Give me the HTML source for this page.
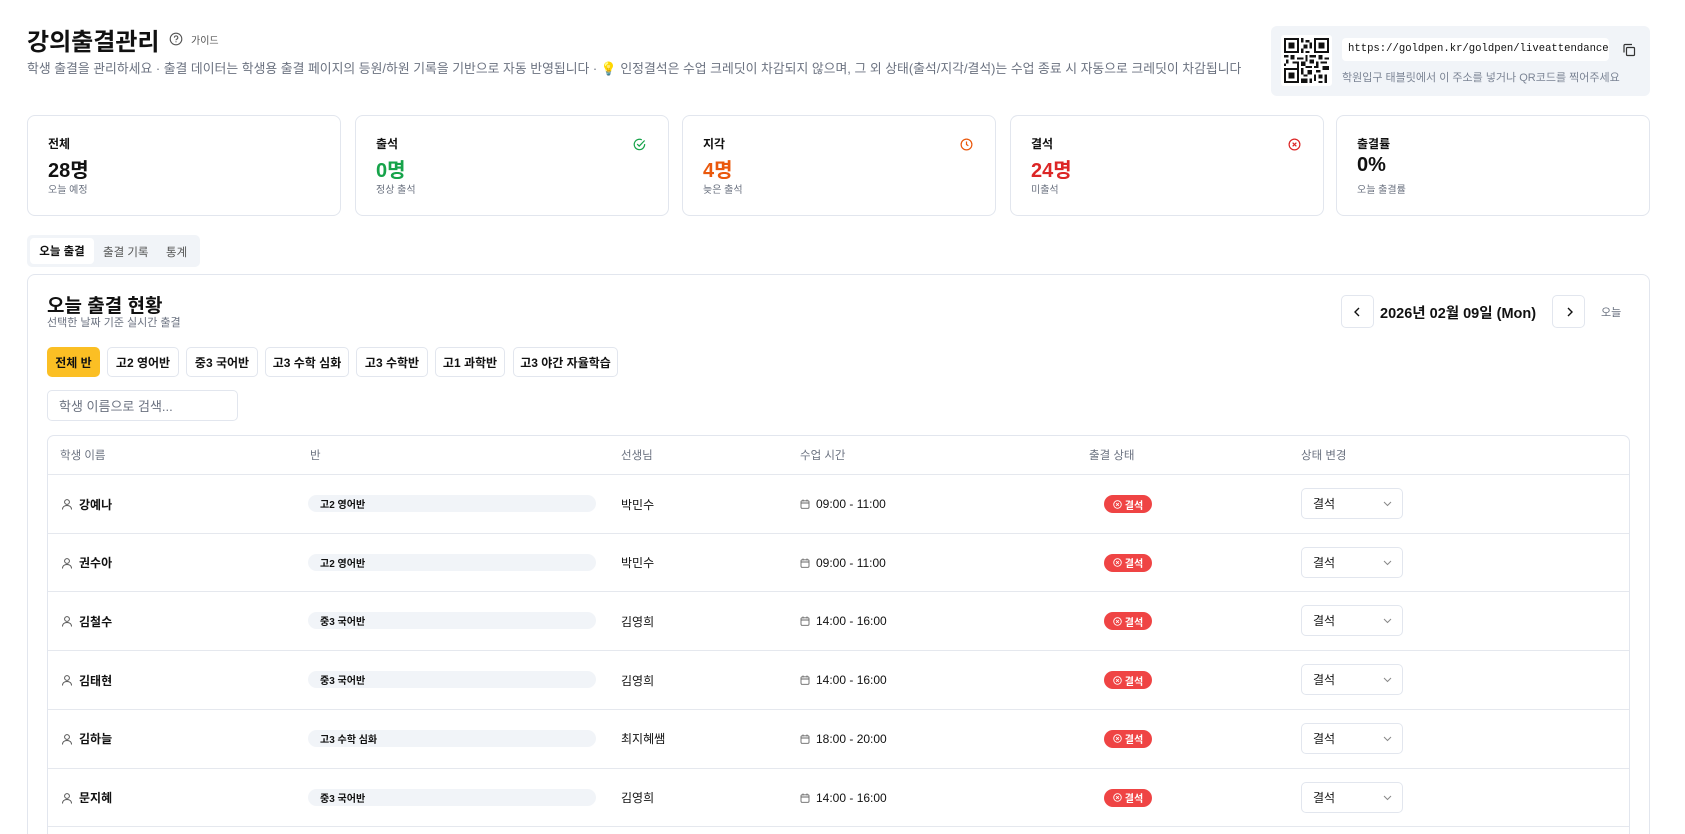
<!DOCTYPE html>
<html><head><meta charset="utf-8"><style>
*{box-sizing:border-box;margin:0;padding:0}
html,body{width:1685px;height:834px;overflow:hidden}
body{background:#fff;font-family:"Liberation Sans","Noto Sans CJK KR",sans-serif;color:#111}
#w{position:relative;width:1685px;height:834px;overflow:hidden}
.a{position:absolute}
.card{position:absolute;top:115px;height:101px;width:314px;border:1px solid #e2e6ee;border-radius:8px;background:#fff}
.card .l{position:absolute;left:20px;top:19px;font-size:12px;font-weight:700}
.card .v{position:absolute;left:20px;top:38px;font-size:20px;font-weight:700}
.card .s{position:absolute;left:20px;top:65px;font-size:10px;color:#6b7280}
.card svg{position:absolute;right:22px;top:22px}
.chip{position:absolute;top:347px;height:30px;border:1px solid #e2e6ee;border-radius:5px;font-size:12px;font-weight:700;display:flex;align-items:center;justify-content:center;background:#fff}
.th{position:absolute;top:447px;font-size:11.5px;color:#6b7280}
.row{position:absolute;left:48px;width:1581px;height:59px;border-top:1px solid #e5e8ee}
.row .c{position:absolute;top:0;height:58px;display:flex;align-items:center;font-size:12px}
.pill{position:absolute;left:260px;top:20px;width:288px;height:17px;background:#f1f4f8;border-radius:9px;font-size:10px;font-weight:700;padding-left:12px;display:flex;align-items:center}
.badge{position:absolute;left:1056px;top:20px;width:48px;height:18px;background:#ef4444;border-radius:9px;color:#fff;font-size:10px;font-weight:700;display:flex;align-items:center;justify-content:center;gap:3px}
.sel{position:absolute;left:1253px;top:13px;width:102px;height:31px;border:1px solid #e2e6ee;border-radius:5px;font-size:12px;padding-left:11px;display:flex;align-items:center}
.sel svg{position:absolute;right:10px;top:12px}
</style></head><body><div id="w">
<div class="a" style="left:27px;top:22px;font-size:24px;font-weight:700">강의출결관리</div>
<svg class="a" style="left:169px;top:32px" width="14" height="14" viewBox="0 0 14 14"><circle cx="7" cy="7" r="5.8" fill="none" stroke="#555" stroke-width="1.1"/><path d="M5.4 5.6a1.7 1.7 0 1 1 2.2 1.6c-.5.2-.6.5-.6 1" fill="none" stroke="#555" stroke-width="1.1"/><circle cx="7" cy="9.8" r=".6" fill="#555"/></svg>
<div class="a" style="left:191px;top:32px;font-size:10px;color:#555">가이드</div>
<div class="a" style="left:27px;top:58px;font-size:12.85px;color:#6b7280;white-space:nowrap">학생 출결을 관리하세요 · 출결 데이터는 학생용 출결 페이지의 등원/하원 기록을 기반으로 자동 반영됩니다 · <span style="color:#f5b400">💡</span> 인정결석은 수업 크레딧이 차감되지 않으며, 그 외 상태(출석/지각/결석)는 수업 종료 시 자동으로 크레딧이 차감됩니다</div>

<div class="a" style="left:1271px;top:26px;width:379px;height:70px;background:#f1f4f8;border-radius:6px"></div>
<div class="a" style="left:1281px;top:35px;width:51px;height:51px;background:#fff;border-radius:3px"></div>
<svg class="a" style="left:1284px;top:38px" width="45" height="45" viewBox="0 0 21 21" shape-rendering="crispEdges"><g fill="#111">
<path d="M0 0h7v7H0zM14 0h7v7h-7zM0 14h7v7H0z"/></g><g fill="#fff"><path d="M1 1h5v5H1zM15 1h5v5h-5zM1 15h5v5H1z"/></g><g fill="#111"><path d="M2 2h3v3H2zM16 2h3v3h-3zM2 16h3v3H2z"/>
<path d="M8 0h1v2H8zM10 1h2v1h-2zM9 3h2v2H9zM12 2h1v3h-1zM8 5h1v2H8zM10 6h2v1h-2zM0 8h2v1H0zM3 8h2v2H3zM6 9h3v1H6zM10 8h1v3h-1zM12 8h3v1h-3zM16 8h2v2h-2zM19 9h2v1h-2zM1 10h1v2H1zM4 11h3v1H4zM8 11h2v2H8zM12 10h2v2h-2zM15 11h1v2h-1zM17 11h3v1h-3zM0 12h1v1H0zM6 12h1v2H6zM10 13h3v1h-3zM14 13h2v1h-2zM18 13h3v2h-3zM8 14h1v3H8zM11 15h2v2h-2zM15 15h2v1h-2zM9 17h2v1H9zM14 17h1v3h-1zM16 17h2v2h-2zM19 17h1v4h-1zM8 19h3v2H8zM12 19h1v2h-1zM16 20h2v1h-2z"/></g></svg>
<div class="a" style="left:1342px;top:38px;width:267px;height:23px;background:#fff;border-radius:4px;font-family:'Liberation Mono',monospace;font-size:10.6px;line-height:23px;padding-left:6px;white-space:nowrap;overflow:hidden">https://goldpen.kr/goldpen/liveattendance</div>
<svg class="a" style="left:1622px;top:43px" width="14" height="14" viewBox="0 0 14 14" fill="none" stroke="#333" stroke-width="1.2"><rect x="4.5" y="4.5" width="8" height="8" rx="1"/><path d="M2 9.5V2.5a1 1 0 0 1 1-1h7"/></svg>
<div class="a" style="left:1342px;top:69px;font-size:11px;color:#7b8494">학원입구 태블릿에서 이 주소를 넣거나 QR코드를 찍어주세요</div>

<div class="card" style="left:27px"><div class="l">전체</div><div class="v">28명</div><div class="s">오늘 예정</div></div>
<div class="card" style="left:355px"><div class="l">출석</div><div class="v" style="color:#16a34a">0명</div><div class="s">정상 출석</div><svg width="13" height="13" viewBox="0 0 14 14" fill="none" stroke="#16a34a" stroke-width="1.3"><path d="M12.5 6.5A5.6 5.6 0 1 1 9.5 2"/><path d="M4.5 6.5l2.2 2.2 5.8-6"/></svg></div>
<div class="card" style="left:682px"><div class="l">지각</div><div class="v" style="color:#ea580c">4명</div><div class="s">늦은 출석</div><svg width="13" height="13" viewBox="0 0 14 14" fill="none" stroke="#ea580c" stroke-width="1.3"><circle cx="7" cy="7" r="5.8"/><path d="M7 3.8V7l2 1.3"/></svg></div>
<div class="card" style="left:1010px"><div class="l">결석</div><div class="v" style="color:#dc2626">24명</div><div class="s">미출석</div><svg width="13" height="13" viewBox="0 0 14 14" fill="none" stroke="#dc2626" stroke-width="1.3"><circle cx="7" cy="7" r="5.8"/><path d="M5 5l4 4M9 5l-4 4"/></svg></div>
<div class="card" style="left:1336px"><div class="l">출결률</div><div class="v">0%</div><div class="s">오늘 출결률</div></div>

<div class="a" style="left:27px;top:235px;width:173px;height:32px;background:#f1f4f8;border-radius:5px"></div>
<div class="a" style="left:30px;top:238px;width:64px;height:26px;background:#fff;border-radius:4px;font-size:11.5px;font-weight:700;display:flex;align-items:center;justify-content:center">오늘 출결</div>
<div class="a" style="left:103px;top:244px;font-size:11.5px;color:#555">출결 기록</div>
<div class="a" style="left:166px;top:244px;font-size:11.5px;color:#555">통계</div>

<div class="a" style="left:27px;top:274px;width:1623px;height:560px;border:1px solid #e2e6ee;border-bottom:none;border-radius:8px 8px 0 0"></div>
<div class="a" style="left:47px;top:291px;font-size:19px;font-weight:700">오늘 출결 현황</div>
<div class="a" style="left:47px;top:314px;font-size:11px;color:#6b7280">선택한 날짜 기준 실시간 출결</div>
<div class="a" style="left:1341px;top:295px;width:33px;height:33px;border:1px solid #e2e6ee;border-radius:5px"></div>
<svg class="a" style="left:1353px;top:307px" width="9" height="10" viewBox="0 0 9 10"><path d="M6 1L2 5l4 4" fill="none" stroke="#111" stroke-width="1.4"/></svg>
<div class="a" style="left:1380px;top:302px;font-size:14.5px;font-weight:700">2026년 02월 09일 (Mon)</div>
<div class="a" style="left:1552px;top:295px;width:33px;height:33px;border:1px solid #e2e6ee;border-radius:5px"></div>
<svg class="a" style="left:1565px;top:307px" width="9" height="10" viewBox="0 0 9 10"><path d="M3 1l4 4-4 4" fill="none" stroke="#111" stroke-width="1.4"/></svg>
<div class="a" style="left:1601px;top:304px;font-size:11px;color:#6b7280">오늘</div>

<div class="chip" style="left:47px;width:53px;background:#fbbf24;border-color:#fbbf24">전체 반</div>
<div class="chip" style="left:107px;width:72px">고2 영어반</div>
<div class="chip" style="left:186px;width:72px">중3 국어반</div>
<div class="chip" style="left:265px;width:84px">고3 수학 심화</div>
<div class="chip" style="left:356px;width:72px">고3 수학반</div>
<div class="chip" style="left:435px;width:70px">고1 과학반</div>
<div class="chip" style="left:513px;width:105px">고3 야간 자율학습</div>
<div class="a" style="left:47px;top:390px;width:191px;height:31px;border:1px solid #e2e6ee;border-radius:5px;font-size:13px;color:#6b7280;padding-left:11px;display:flex;align-items:center">학생 이름으로 검색...</div>

<div class="a" style="left:47px;top:435px;width:1583px;height:399px;border:1px solid #e2e6ee;border-bottom:none;border-radius:7px 7px 0 0"></div>
<div class="th" style="left:60px">학생 이름</div>
<div class="th" style="left:310px">반</div>
<div class="th" style="left:621px">선생님</div>
<div class="th" style="left:800px">수업 시간</div>
<div class="th" style="left:1089px">출결 상태</div>
<div class="th" style="left:1301px">상태 변경</div>

<div id="rows"></div>
<script>
var d=[["강예나","고2 영어반","박민수","09:00 - 11:00"],["권수아","고2 영어반","박민수","09:00 - 11:00"],["김철수","중3 국어반","김영희","14:00 - 16:00"],["김태현","중3 국어반","김영희","14:00 - 16:00"],["김하늘","고3 수학 심화","최지혜쌤","18:00 - 20:00"],["문지혜","중3 국어반","김영희","14:00 - 16:00"]];
var h="";
d.forEach(function(r,i){var t=474+i*58.7;
h+='<div class="row" style="top:'+t+'px">'+
'<div class="c" style="left:13px"><svg width="12" height="12" viewBox="0 0 12 12" fill="none" stroke="#555" stroke-width="1"><circle cx="6" cy="4" r="2.4"/><path d="M1.5 11.5c0-2.6 2-4 4.5-4s4.5 1.4 4.5 4"/></svg><span style="margin-left:6px;font-weight:700">'+r[0]+'</span></div>'+
'<div class="pill">'+r[1]+'</div>'+
'<div class="c" style="left:573px">'+r[2]+'</div>'+
'<div class="c" style="left:752px"><svg width="10" height="10" viewBox="0 0 10 10" fill="none" stroke="#666" stroke-width=".9"><rect x="1" y="1.8" width="8" height="7.5" rx="1"/><path d="M1 4h8M3 .5v2M7 .5v2"/></svg><span style="margin-left:6px">'+r[3]+'</span></div>'+
'<div class="badge"><svg width="9" height="9" viewBox="0 0 10 10" fill="none" stroke="#fff" stroke-width="1"><circle cx="5" cy="5" r="4.2"/><path d="M3.5 3.5l3 3M6.5 3.5l-3 3"/></svg>결석</div>'+
'<div class="sel">결석<svg width="9" height="6" viewBox="0 0 9 6"><path d="M1 1l3.5 3.5L8 1" fill="none" stroke="#888" stroke-width="1"/></svg></div>'+
'</div>';});
document.getElementById("rows").innerHTML=h;
</script>
<div class="a" style="left:48px;top:826px;width:1581px;height:1px;background:#e5e8ee"></div>
</div></body></html>
